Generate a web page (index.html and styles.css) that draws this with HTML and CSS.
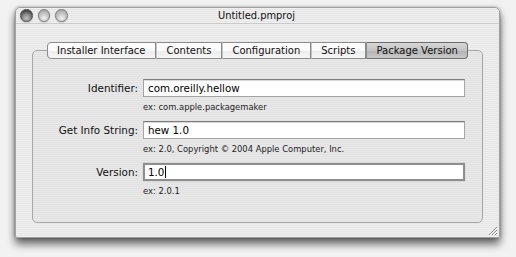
FILE: index.html
```html
<!DOCTYPE html>
<html>
<head>
<meta charset="utf-8">
<link rel="stylesheet" href="styles.css">
</head>
<body>
<div class="window">
  <div class="titlebar">
    <div class="lights">
      <span class="light close"></span>
      <span class="light"></span>
      <span class="light"></span>
    </div>
    <div class="title">Untitled.pmproj</div>
    <div></div>
  </div>
  <div class="content">
    <div class="tabs">
      <div class="tab first">Installer Interface</div>
      <div class="tab">Contents</div>
      <div class="tab">Configuration</div>
      <div class="tab">Scripts</div>
      <div class="tab last selected">Package Version</div>
    </div>
    <div class="box">
      <div class="form">
        <div class="label">Identifier:</div>
        <div class="field">com.oreilly.hellow</div>
        <div class="hint">ex: com.apple.packagemaker</div>
        <div class="label">Get Info String:</div>
        <div class="field">hew 1.0</div>
        <div class="hint">ex: 2.0, Copyright © 2004 Apple Computer, Inc.</div>
        <div class="label">Version:</div>
        <div class="field focus">1.0<span class="caret"></span></div>
        <div class="hint">ex: 2.0.1</div>
      </div>
    </div>
  </div>
  <svg class="grip" width="12" height="12" viewBox="0 0 12 12">
    <path d="M11 3 L3 11 M11 6 L6 11 M11 9 L9 11" stroke="#8a8a8a" stroke-width="1"/>
    <path d="M11 4 L4 11 M11 7 L7 11" stroke="#fafafa" stroke-width="1"/>
  </svg>
</div>
</body>
</html>
```

FILE: styles.css
```css
html, body {
  margin: 0;
  padding: 0;
}
body {
  background: #f2f2f2;
  font-family: "DejaVu Sans", "Noto Sans", sans-serif;
  color: #111;
  padding: 7px 16px 0 15px;
  height: 257px;
  box-sizing: border-box;
  overflow: hidden;
}
.window {
  position: relative;
  width: 485px;
  height: 231px;
  border-radius: 5px 5px 2px 2px;
  background: repeating-linear-gradient(180deg, #eeeeee 0px, #eeeeee 1px, #e7e7e7 1px, #e7e7e7 2px);
  box-shadow: 0 6px 9px rgba(0,0,0,0.6), 0 0 3px rgba(0,0,0,0.35);
  box-sizing: border-box;
  border: 1px solid #a0a0a0;
}
.titlebar {
  height: 15px;
  display: grid;
  grid-template-columns: 1fr auto 1fr;
  align-items: center;
  padding: 0 6px 0 4px;
  border-bottom: 1px solid #cacaca;
  background: repeating-linear-gradient(180deg, #f0f0f0 0px, #f0f0f0 1px, #e5e5e5 1px, #e5e5e5 2px);
  border-radius: 5px 5px 0 0;
}
.lights {
  display: flex;
  gap: 5px;
  align-items: center;
}
.light {
  width: 12.5px;
  height: 12.5px;
  border-radius: 50%;
  border: 1px solid #7c7c7c;
  background: radial-gradient(circle at 50% 75%, #f2f2f2 0%, #c8c8c8 45%, #9a9a9a 100%);
  box-sizing: border-box;
  box-shadow: 0 1px 1px rgba(0,0,0,0.15);
}
.light.close {
  border-color: #4e4e4e;
  background: radial-gradient(circle at 50% 75%, #c0c0c0 0%, #8a8a8a 40%, #4a4a4a 75%, #3c3c3c 100%);
}
.title {
  font-size: 9.9px;
  color: #111;
  line-height: 15px;
}
.content {
  padding: 18px 16px 0 16px;
}
.tabs {
  display: flex;
  justify-content: center;
  position: relative;
  z-index: 1;
  height: 17px;
}
.tab {
  font-size: 10px;
  line-height: 15px;
  height: 17px;
  box-sizing: border-box;
  padding: 0 9.5px;
  border: 1px solid #8c8c8c;
  border-left: none;
  background: linear-gradient(180deg, #ffffff 0%, #fafafa 50%, #ececec 51%, #f6f6f6 100%);
  color: #111;
  white-space: nowrap;
}
.tab + .tab {
  border-left: 1px solid #c4c4c4;
}
.tab.first {
  border-left: 1px solid #8c8c8c;
  border-radius: 4px 0 0 4px;
}
.tab.last {
  border-radius: 0 4px 4px 0;
}
.tab.selected {
  background: linear-gradient(180deg, #d6d6d6 0%, #c4c4c4 50%, #b2b2b2 51%, #c8c8c8 100%);
  border-color: #6e6e6e;
  border-left-color: #8a8a8a;
}
.box {
  margin-top: -9px;
  height: 173px;
  box-sizing: border-box;
  border: 1px solid #a6a6a6;
  border-radius: 5px;
  background: repeating-linear-gradient(180deg, #e8e8e8 0px, #e8e8e8 1px, #e2e2e2 1px, #e2e2e2 2px);
  padding: 28px 17px 0 0;
}
.form {
  display: grid;
  grid-template-columns: 105px 322px;
  column-gap: 5px;
}
.label {
  font-size: 10.4px;
  text-align: right;
  align-self: center;
  white-space: nowrap;
  color: #111;
}
.field {
  height: 18px;
  box-sizing: border-box;
  background: #fff;
  border: 1px solid #a4a4a4;
  border-top-color: #7c7c7c;
  font-size: 10.3px;
  line-height: 16px;
  padding-left: 4px;
  color: #000;
  box-shadow: inset 0 1px 0 #d8d8d8;
}
.field.focus {
  border: 2px solid #8e8e8e;
  line-height: 14px;
  padding-left: 3px;
  box-shadow: 0 0 1px #9a9a9a;
}
.caret {
  display: inline-block;
  width: 1px;
  height: 12px;
  background: #000;
  vertical-align: -2px;
  margin-left: 1px;
}
.hint {
  grid-column: 2;
  font-size: 8.4px;
  line-height: 12px;
  margin: 4px 0 8px 0;
  color: #222;
}
.grip {
  position: absolute;
  right: 1px;
  bottom: 1px;
}
```
